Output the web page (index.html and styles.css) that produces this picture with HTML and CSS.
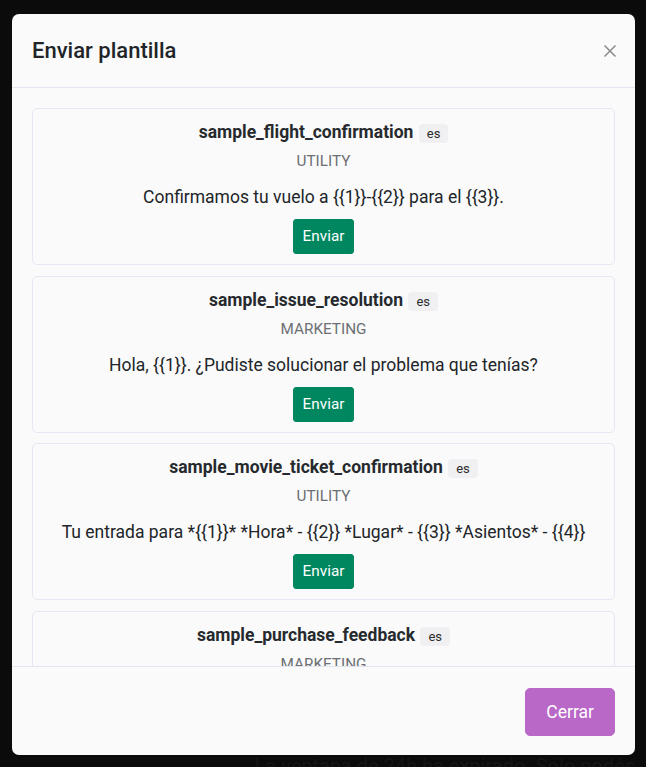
FILE: index.html
```html
<!DOCTYPE html>
<html lang="es">
<head>
  <meta charset="UTF-8">
  <title>Enviar plantilla</title>
  <link rel="stylesheet" href="styles.css">
</head>
<body>
  <div class="modal">
    <div class="modal-header">
      <h2 class="modal-title">Enviar plantilla</h2>
      <button class="close-btn" aria-label="Cerrar">
        <svg width="14" height="14" viewBox="0 0 14 14">
          <path d="M1.5 1.5 L12.5 12.5 M12.5 1.5 L1.5 12.5" stroke="#8a8a8a" stroke-width="1.5" fill="none"/>
        </svg>
      </button>
    </div>

    <div class="modal-body">
      <div class="template-card">
        <div class="template-name">sample_flight_confirmation <span class="lang">es</span></div>
        <div class="template-category">UTILITY</div>
        <p class="template-text">Confirmamos tu vuelo a {{1}}-{{2}} para el {{3}}.</p>
        <button class="send-btn">Enviar</button>
      </div>

      <div class="template-card">
        <div class="template-name">sample_issue_resolution <span class="lang">es</span></div>
        <div class="template-category">MARKETING</div>
        <p class="template-text">Hola, {{1}}. ¿Pudiste solucionar el problema que tenías?</p>
        <button class="send-btn">Enviar</button>
      </div>

      <div class="template-card">
        <div class="template-name">sample_movie_ticket_confirmation <span class="lang">es</span></div>
        <div class="template-category">UTILITY</div>
        <p class="template-text">Tu entrada para *{{1}}* *Hora* - {{2}} *Lugar* - {{3}} *Asientos* - {{4}}</p>
        <button class="send-btn">Enviar</button>
      </div>

      <div class="template-card">
        <div class="template-name">sample_purchase_feedback <span class="lang">es</span></div>
        <div class="template-category">MARKETING</div>
        <p class="template-text">¡Gracias por comprar {{1}}! Valoramos tu opinión.</p>
        <button class="send-btn">Enviar</button>
      </div>
    </div>

    <div class="modal-footer">
      <button class="close-footer-btn">Cerrar</button>
    </div>
  </div>
  <p class="behind">La ventana de 24h ha expirado. Solo podés</p>
</body>
</html>
```

FILE: styles.css
```css
body {
  margin: 0;
  padding: 14px 11px 0 12px;
  background-color: #0b0b0b;
  font-family: Roboto, "Liberation Sans", sans-serif;
  color: #212529;
  height: 767px;
  box-sizing: border-box;
  overflow: hidden;
}
.modal {
  width: 623px;
  height: 741px;
  background-color: #fafafa;
  border-radius: 7px;
  display: flex;
  flex-direction: column;
  overflow: hidden;
}
.modal-header {
  display: flex;
  align-items: center;
  justify-content: space-between;
  padding: 21px 18px 20px 20px;
  border-bottom: 1px solid #e3e5f1;
}
.modal-title {
  margin: 0;
  font-size: 22px;
  font-weight: 500;
  line-height: 32px;
  color: #212529;
}
.close-btn {
  border: none;
  background: none;
  padding: 0;
  width: 14px;
  height: 14px;
  cursor: pointer;
}
.close-btn svg {
  display: block;
}
.modal-body {
  flex: 1;
  overflow: hidden;
  padding: 20px;
}
.template-card {
  border: 1px solid #e5e7f3;
  border-radius: 5px;
  background-color: #fafafa;
  padding: 11px 16px 10px;
  margin-bottom: 10.5px;
  text-align: center;
}
.template-name {
  font-size: 17.5px;
  font-weight: 700;
  line-height: 24px;
  color: #262a2e;
}
.lang {
  display: inline-block;
  margin-left: 1px;
  padding: 0 8px;
  font-size: 13px;
  font-weight: 400;
  line-height: 19px;
  border-radius: 4px;
  background-color: #f0f0f3;
  color: #2b2b2b;
  vertical-align: 0;
}
.template-category {
  margin-top: 6px;
  font-size: 15.3px;
  line-height: 22px;
  color: #6c6f73;
}
.template-text {
  margin: 13px 0 0;
  font-size: 17.5px;
  line-height: 25px;
  color: #212529;
}
.send-btn {
  margin-top: 9px;
  font-family: inherit;
  font-size: 15.3px;
  line-height: 21px;
  padding: 6px 9px;
  border: 1px solid #00875f;
  border-radius: 3px;
  background-color: #00875f;
  color: white;
  cursor: pointer;
}
.modal-footer {
  display: flex;
  justify-content: flex-end;
  padding: 21px 20px 19px;
  border-top: 1px solid #e3e5f1;
}
.close-footer-btn {
  font-family: inherit;
  font-size: 17.5px;
  line-height: 28px;
  padding: 9px 20px;
  border: 1px solid #ba68c8;
  border-radius: 5px;
  background-color: #ba68c8;
  color: white;
  cursor: pointer;
}
.behind {
  margin: 1px 0 0;
  text-align: right;
  font-size: 20px;
  line-height: 20px;
  color: #151515;
  white-space: nowrap;
}
```
